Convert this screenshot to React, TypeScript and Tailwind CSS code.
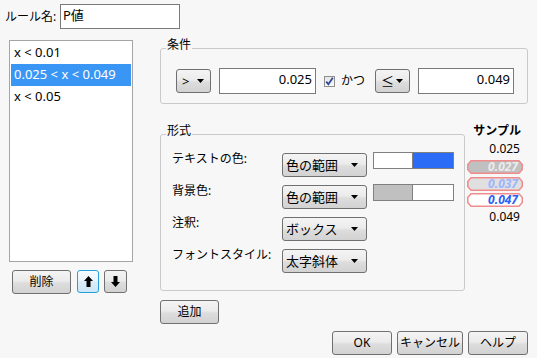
import React from "react";

const FONT = { fontFamily: '"Segoe UI", "Noto Sans", "Noto Sans CJK JP", sans-serif' };

const skin =
  "border border-[#707070] rounded-[3px] bg-[linear-gradient(to_bottom,#f4f4f4,#ebebeb_45%,#dddddd_55%,#d2d2d2)] flex items-center text-[12px] text-black";
const btn = `${skin} justify-center`;

function Caret() {
  return (
    <svg width="7" height="4" viewBox="0 0 7 4" className="shrink-0">
      <polygon points="0,0 7,0 3.5,4" fill="#000" />
    </svg>
  );
}

function Combo({ label }: { label: string }) {
  return (
    <div className={`${skin} w-[85px] h-[24px] justify-between pl-[3px] pr-[8px]`}>
      <span className="text-[13px] leading-[16px]">{label}</span>
      <Caret />
    </div>
  );
}

function Pill({ text, bg, color }: { text: string; bg: string; color: string }) {
  return (
    <div className="relative w-[56px] h-[14px] ml-[2px]">
      <svg width="56" height="14" viewBox="0 0 56 14" className="absolute inset-0">
        <polygon
          points="4,0.75 52,0.75 55.25,4.5 55.25,9.5 52,13.25 4,13.25 0.75,9.5 0.75,4.5"
          fill={bg}
          stroke="#f08c8c"
          strokeWidth="1.5"
        />
      </svg>
      <div
        className="relative text-right pr-[5px] text-[12px] leading-[14px] font-bold italic"
        style={{ color }}
      >
        {text}
      </div>
    </div>
  );
}

function Arrow({ up }: { up: boolean }) {
  return (
    <svg width="9" height="11" viewBox="0 0 9 11" style={{ transform: up ? undefined : "rotate(180deg)" }}>
      <polygon points="4.5,0 9,5 6.5,5 6.5,11 2.5,11 2.5,5 0,5" fill="#000" />
    </svg>
  );
}

export default function App() {
  return (
    <div className="w-[537px] h-[358px] bg-[#f7f7f7] overflow-hidden text-black" style={FONT}>
      {/* top row */}
      <div className="flex items-center pt-[4px] pl-[5px]">
        <span className="text-[12px] leading-[16px] w-[55px]">ルール名:</span>
        <div className="w-[120px] h-[25px] border border-[#7a7a7a] bg-white text-[13px] leading-[16px] pl-[2px] pt-[2px]">
          P値
        </div>
      </div>

      <div className="flex mt-[8px]">
        {/* left column */}
        <div className="ml-[9px] w-[124px] shrink-0">
          <div className="mt-[3px] h-[222px] border border-[#a5a5a5] bg-white p-[1px] text-[13px]">
            <div className="h-[22px] flex items-center pl-[3px]">x &lt; 0.01</div>
            <div className="h-[22px] flex items-center pl-[3px] bg-[#3a96f5] text-white">
              0.025 &lt; x &lt; 0.049
            </div>
            <div className="h-[22px] flex items-center pl-[3px]">x &lt; 0.05</div>
          </div>
          <div className="flex items-start mt-[8px] pl-[3px]">
            <div className={`${btn} w-[59px] h-[24px]`}>削除</div>
            <div className="ml-[6px] w-[22px] h-[23px] border border-[#26a0da] rounded-[3px] bg-[linear-gradient(to_bottom,#f6fbfe,#e8f4fc_50%,#dceefa_50%,#cde6f7)] flex items-center justify-center">
              <Arrow up />
            </div>
            <div className={`${btn} ml-[5px] w-[23px] h-[23px]`}>
              <Arrow up={false} />
            </div>
          </div>
        </div>

        {/* right column */}
        <div className="ml-[27px] w-[368px] shrink-0">
          <fieldset className="border border-[#cacaca] rounded-[3px] mt-[1px]">
            <legend className="ml-[5px] px-[1px] text-[12px] leading-[14px] pb-[6px]">条件</legend>
            <div className="flex items-center pt-[10px] pb-[9px] pl-[15px]">
              <div className={`${skin} w-[35px] h-[24px] justify-between pl-[5px] pr-[6px]`}>
                <span className="text-[13px] leading-[16px]">&gt;</span>
                <Caret />
              </div>
              <div className="ml-[8px] w-[97px] h-[26px] border border-[#7a7a7a] bg-white text-[13px] text-right pr-[3px] leading-[16px] pt-[2px]">
                0.025
              </div>
              <div className="ml-[8px] w-[11px] h-[11px] border border-[#8f8f8f] bg-[linear-gradient(to_bottom,#e6e6e6,#fafafa)] flex items-center justify-center">
                <svg width="9" height="9" viewBox="0 0 9 9">
                  <path d="M1.2 4.6 L3.4 7.2 L7.8 0.8" fill="none" stroke="#2f4a9a" strokeWidth="1.8" />
                </svg>
              </div>
              <span className="ml-[6px] text-[12px] leading-[16px]">かつ</span>
              <div className={`${skin} ml-[10px] w-[35px] h-[24px] justify-between pl-[5px] pr-[6px]`}>
                <span className="text-[13px] leading-[16px]">≤</span>
                <Caret />
              </div>
              <div className="ml-[8px] w-[96px] h-[26px] border border-[#7a7a7a] bg-white text-[13px] text-right pr-[3px] leading-[16px] pt-[2px]">
                0.049
              </div>
            </div>
          </fieldset>

          <div className="flex mt-[20px]">
            <fieldset className="w-[305px] border border-[#cacaca] rounded-[3px]">
              <legend className="ml-[5px] px-[1px] text-[12px] leading-[14px] pb-[6px]">形式</legend>
              <div className="flex flex-col gap-[8px] pt-[9px] pb-[17px] pl-[11px] text-[12px]">
                <div className="flex items-start">
                  <span className="w-[110px] leading-[16px] -mt-[2px]">テキストの色:</span>
                  <Combo label="色の範囲" />
                  <div className="ml-[6px] -mt-[1px] w-[81px] h-[17px] border border-[#808080] flex">
                    <div className="w-[39px] bg-white border-r border-[#808080]" />
                    <div className="flex-1 bg-[#2b6cf7]" />
                  </div>
                </div>
                <div className="flex items-start">
                  <span className="w-[110px] leading-[16px] -mt-[2px]">背景色:</span>
                  <Combo label="色の範囲" />
                  <div className="ml-[6px] -mt-[1px] w-[81px] h-[17px] border border-[#808080] flex">
                    <div className="w-[39px] bg-[#c0c0c0] border-r border-[#808080]" />
                    <div className="flex-1 bg-white" />
                  </div>
                </div>
                <div className="flex items-start">
                  <span className="w-[110px] leading-[16px] -mt-[2px]">注釈:</span>
                  <Combo label="ボックス" />
                </div>
                <div className="flex items-start">
                  <span className="w-[110px] leading-[16px] -mt-[2px]">フォントスタイル:</span>
                  <Combo label="太字斜体" />
                </div>
              </div>
            </fieldset>

            <div className="w-[63px] flex flex-col text-[12px]">
              <div className="text-right pr-[7px] leading-[16px] font-bold mt-[-1px]">サンプル</div>
              <div className="text-right pr-[8px] leading-[16px] mt-[2px]">0.025</div>
              <div className="mt-[3px]">
                <Pill text="0.027" bg="#c0c0c0" color="#ececec" />
              </div>
              <div className="mt-[3px]">
                <Pill text="0.037" bg="#e0e0e0" color="#9cb5ff" />
              </div>
              <div className="mt-[2px]">
                <Pill text="0.047" bg="#ffffff" color="#2b62f5" />
              </div>
              <div className="text-right pr-[8px] leading-[16px] mt-[2px]">0.049</div>
            </div>
          </div>

          <div className={`${btn} mt-[9px] w-[59px] h-[24px]`}>追加</div>

          <div className="flex justify-end gap-[5px] mt-[7px]">
            <div className={`${btn} w-[60px] h-[24px]`}>OK</div>
            <div className={`${btn} w-[66px] h-[24px]`}>キャンセル</div>
            <div className={`${btn} w-[60px] h-[24px]`}>ヘルプ</div>
          </div>
        </div>
      </div>
    </div>
  );
}
